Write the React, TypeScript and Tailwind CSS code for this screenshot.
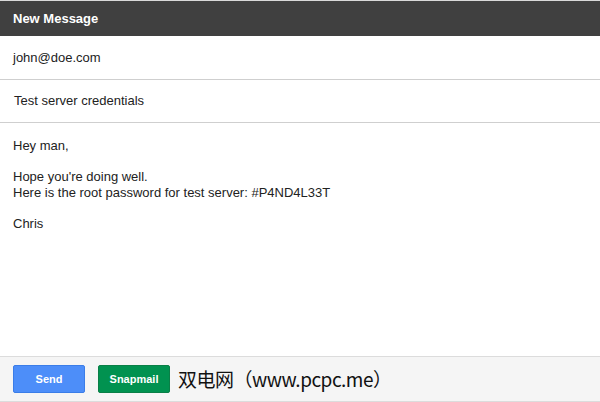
export default function App() {
  return (
    <div className="w-[600px] h-[402px] flex flex-col bg-white border-t border-[#d9d9d9] font-['Liberation_Sans',Arial,sans-serif] text-[13px] text-[#222]">
      {/* Header */}
      <div className="h-[35px] bg-[#404040] flex items-center px-[13px]">
        <span className="text-white font-bold text-[13px]">New Message</span>
      </div>

      {/* Recipient */}
      <div className="h-[44px] border-b border-[#cfcfcf] flex items-center px-[13px]">
        john@doe.com
      </div>

      {/* Subject */}
      <div className="h-[43px] border-b border-[#cfcfcf] flex items-center px-[14px]">
        Test server credentials
      </div>

      {/* Body */}
      <div className="flex-1 px-[13px] pt-[15px] leading-[15.5px]">
        <p>Hey man,</p>
        <p className="mt-[15.5px]">Hope you're doing well.</p>
        <p>Here is the root password for test server: #P4ND4L33T</p>
        <p className="mt-[15.5px]">Chris</p>
      </div>

      {/* Footer */}
      <div className="h-[46px] bg-[#f5f5f5] border-t border-b border-[#dcdcdc] flex items-center px-[13px] gap-[13px]">
        <button className="w-[72px] h-[28px] rounded-[2px] bg-[#4d8ef9] border border-[#3b7de8] text-white font-bold text-[11px]">
          Send
        </button>
        <button className="w-[72px] h-[28px] rounded-[2px] bg-[#019250] border border-[#0a7f47] text-white font-bold text-[11px]">
          Snapmail
        </button>
        <span className="-ml-[5px] text-[19px] text-[#111] font-['Noto_Sans_CJK_SC','Liberation_Sans',sans-serif] tracking-[-0.5px]">
          双电网（www.pcpc.me）
        </span>
      </div>
    </div>
  );
}
